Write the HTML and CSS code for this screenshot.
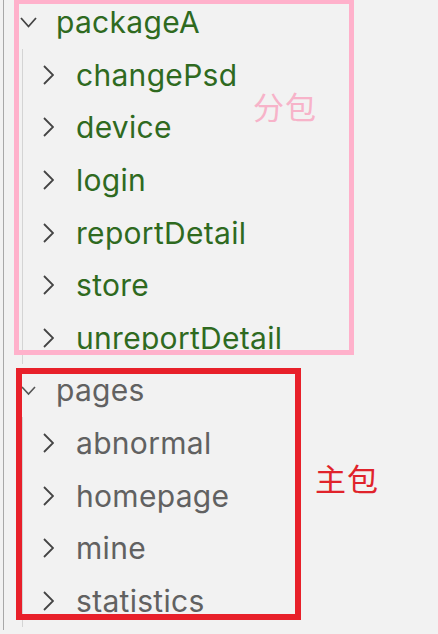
FILE: index.html
```html
<!DOCTYPE html>
<html>
<head>
<meta charset="utf-8">
<link rel="stylesheet" href="styles.css">
</head>
<body>
<div class="explorer">
  <div class="tree">
    <div class="folder green">
      <div class="row top">
        <svg class="chev-down" width="17" height="11" viewBox="0 0 17 11"><path d="M1 1 L8.5 9.5 L16 1" fill="none" stroke="#444" stroke-width="1.8"/></svg>
        <span class="label">packageA</span>
      </div>
      <div class="children">
        <div class="row child"><svg class="chev-right" width="11" height="20" viewBox="0 0 11 20"><path d="M1 1 L10 10 L1 19" fill="none" stroke="#444" stroke-width="1.8"/></svg><span class="label">changePsd</span></div>
        <div class="row child"><svg class="chev-right" width="11" height="20" viewBox="0 0 11 20"><path d="M1 1 L10 10 L1 19" fill="none" stroke="#444" stroke-width="1.8"/></svg><span class="label">device</span></div>
        <div class="row child"><svg class="chev-right" width="11" height="20" viewBox="0 0 11 20"><path d="M1 1 L10 10 L1 19" fill="none" stroke="#444" stroke-width="1.8"/></svg><span class="label">login</span></div>
        <div class="row child"><svg class="chev-right" width="11" height="20" viewBox="0 0 11 20"><path d="M1 1 L10 10 L1 19" fill="none" stroke="#444" stroke-width="1.8"/></svg><span class="label">reportDetail</span></div>
        <div class="row child"><svg class="chev-right" width="11" height="20" viewBox="0 0 11 20"><path d="M1 1 L10 10 L1 19" fill="none" stroke="#444" stroke-width="1.8"/></svg><span class="label">store</span></div>
        <div class="row child"><svg class="chev-right" width="11" height="20" viewBox="0 0 11 20"><path d="M1 1 L10 10 L1 19" fill="none" stroke="#444" stroke-width="1.8"/></svg><span class="label">unreportDetail</span></div>
      </div>
    </div>
    <div class="folder grey">
      <div class="row top">
        <svg class="chev-down" width="17" height="11" viewBox="0 0 17 11"><path d="M2 2 L8.5 9 L15 2" fill="none" stroke="#555" stroke-width="1.6"/></svg>
        <span class="label">pages</span>
      </div>
      <div class="children">
        <div class="row child"><svg class="chev-right" width="11" height="20" viewBox="0 0 11 20"><path d="M1 1 L10 10 L1 19" fill="none" stroke="#444" stroke-width="1.8"/></svg><span class="label">abnormal</span></div>
        <div class="row child"><svg class="chev-right" width="11" height="20" viewBox="0 0 11 20"><path d="M1 1 L10 10 L1 19" fill="none" stroke="#444" stroke-width="1.8"/></svg><span class="label">homepage</span></div>
        <div class="row child"><svg class="chev-right" width="11" height="20" viewBox="0 0 11 20"><path d="M1 1 L10 10 L1 19" fill="none" stroke="#444" stroke-width="1.8"/></svg><span class="label">mine</span></div>
        <div class="row child"><svg class="chev-right" width="11" height="20" viewBox="0 0 11 20"><path d="M1 1 L10 10 L1 19" fill="none" stroke="#444" stroke-width="1.8"/></svg><span class="label">statistics</span></div>
      </div>
    </div>
  </div>
  <div class="box box-pink"></div>
  <div class="box box-red"></div>
  <div class="note note-pink">分包</div>
  <div class="note note-red">主包</div>
</div>
</body>
</html>
```

FILE: styles.css
```css
html, body {
  margin: 0;
  padding: 0;
  background: #f2f2f2;
}
body {
  width: 438px;
  height: 634px;
  overflow: hidden;
}
.explorer {
  position: relative;
  margin-left: 3px;
  border-left: 1px solid #a8a8a8;
  height: 634px;
  font-family: "Inter", "Noto Sans", sans-serif;
  font-size: 30px;
}
.tree {
  padding-top: 0;
  margin-top: -4px;
}
.row {
  display: flex;
  align-items: center;
  height: 52.6px;
  white-space: nowrap;
}
.row.top {
  padding-left: 16px;
}
.chev-down {
  flex: none;
  margin-right: 19px;
}
.children {
  margin-left: 18px;
  border-left: 1px solid #d4d4d4;
}
.row.child {
  padding-left: 20px;
}
.chev-right {
  flex: none;
  margin-right: 22px;
}
.label {
  line-height: 1;
  letter-spacing: 0.3px;
}
.green .label {
  color: #2f6a1f;
}
.grey .label {
  color: #616161;
}
.box {
  position: absolute;
  box-sizing: border-box;
}
.box-pink {
  left: 10px;
  top: 3px;
  width: 340px;
  height: 356px;
  border: 5px solid #ffb1cb;
}
.box-red {
  left: 12px;
  top: 372px;
  width: 285px;
  height: 252px;
  border: 6px solid #e8202a;
}
.note {
  position: absolute;
  font-family: "Noto Sans CJK SC", sans-serif;
  font-size: 31px;
  line-height: 1;
  letter-spacing: 1px;
}
.note-pink {
  left: 249px;
  top: 94px;
  color: #f7b3c9;
}
.note-red {
  left: 311px;
  top: 466px;
  color: #e0232b;
}
```
